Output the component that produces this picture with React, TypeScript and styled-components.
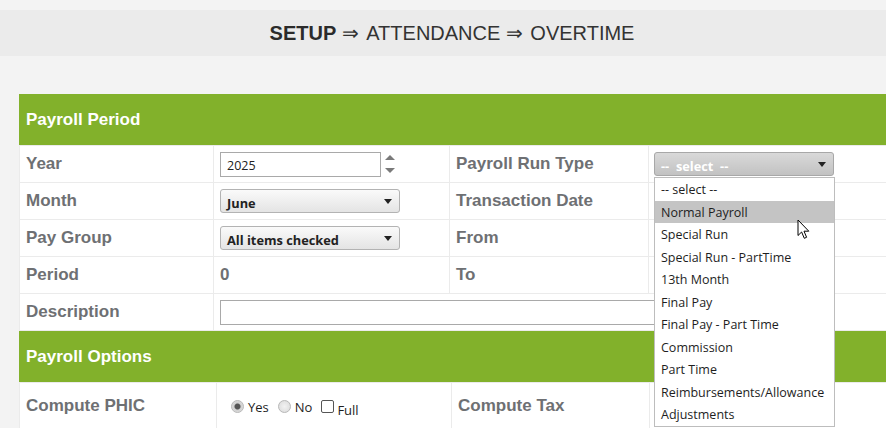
import React from 'react'
import styled, { createGlobalStyle } from 'styled-components'

const runTypes = [
  '-- select --',
  'Normal Payroll',
  'Special Run',
  'Special Run - PartTime',
  '13th Month',
  'Final Pay',
  'Final Pay - Part Time',
  'Commission',
  'Part Time',
  'Reimbursements/Allowance',
  'Adjustments',
]

const GlobalStyle = createGlobalStyle`
  html, body {
    margin: 0;
    padding: 0;
    background: #f3f3f3;
    overflow: hidden;
  }
  body {
    font-family: 'Liberation Sans', Arial, sans-serif;
  }
`

export default function App() {
  return (
    <Page>
      <GlobalStyle />
      <TopBar>
        <Crumb>SETUP</Crumb>
        <Sep>⇒</Sep>ATTENDANCE<Sep>⇒</Sep>OVERTIME
      </TopBar>
      <Content>
        <SectionHeader>Payroll Period</SectionHeader>
        <FormTable>
          <colgroup>
            <Col $w={194} />
            <Col $w={236} />
            <Col $w={199} />
            <Col />
          </colgroup>
          <tbody>
            <Row $h={37}>
              <Label>Year</Label>
              <Cell>
                <SpinWrap>
                  <TextInput $w={161} defaultValue="2025" />
                  <Spinner>
                    <SpinArrow $up />
                    <SpinArrow />
                  </Spinner>
                </SpinWrap>
              </Cell>
              <Label>Payroll Run Type</Label>
              <Cell $anchor $pad={5}>
                <Select $dark>
                  <span>--  select  --</span>
                  <Caret />
                </Select>
                <Menu>
                  {runTypes.map((t, i) => (
                    <MenuItem key={t} $active={i === 1}>
                      {t}
                    </MenuItem>
                  ))}
                  <Cursor viewBox="0 0 13 21" width="13" height="21">
                    <path
                      d="M1 1 L1 16.5 L4.6 13 L7.3 19.3 L9.6 18.3 L7 12.2 L11.8 12.2 Z"
                      fill="#fff"
                      stroke="#000"
                      strokeWidth="1"
                      strokeLinejoin="round"
                    />
                  </Cursor>
                </Menu>
              </Cell>
            </Row>
            <Row $h={37}>
              <Label>Month</Label>
              <Cell>
                <Select>
                  <span>June</span>
                  <Caret />
                </Select>
              </Cell>
              <Label>Transaction Date</Label>
              <Cell />
            </Row>
            <Row $h={37}>
              <Label>Pay Group</Label>
              <Cell>
                <Select>
                  <span>All items checked</span>
                  <Caret />
                </Select>
              </Cell>
              <Label>From</Label>
              <Cell />
            </Row>
            <Row $h={37}>
              <Label>Period</Label>
              <Label>0</Label>
              <Label>To</Label>
              <Cell />
            </Row>
            <Row $h={37}>
              <Label>Description</Label>
              <Cell colSpan={3}>
                <TextInput $w={560} />
              </Cell>
            </Row>
          </tbody>
        </FormTable>
        <SectionHeader>Payroll Options</SectionHeader>
        <FormTable>
          <colgroup>
            <Col $w={197} />
            <Col $w={235} />
            <Col $w={198} />
            <Col />
          </colgroup>
          <tbody>
            <Row $h={48}>
              <Label>Compute PHIC</Label>
              <Cell $pad={14}>
                <Choices>
                  <Radio $checked />
                  <ChoiceText>Yes</ChoiceText>
                  <Radio />
                  <ChoiceText>No</ChoiceText>
                  <Check />
                  <ChoiceText $low>Full</ChoiceText>
                </Choices>
              </Cell>
              <Label>Compute Tax</Label>
              <Cell />
            </Row>
          </tbody>
        </FormTable>
      </Content>
    </Page>
  )
}

const Page = styled.div`
  width: 886px;
  height: 428px;
  overflow: hidden;
`

const TopBar = styled.div`
  margin-top: 10px;
  height: 46px;
  padding-left: 18px;
  box-sizing: border-box;
  background: #ebebeb;
  display: flex;
  align-items: center;
  justify-content: center;
  font-size: 20px;
  color: #333;
`

const Crumb = styled.b`
  color: #2b2b2b;
`

const Sep = styled.span`
  margin: 0 7px 0 6px;
`

const Content = styled.div`
  padding: 38px 0 0 19px;
`

const SectionHeader = styled.div`
  width: 880px;
  height: 51px;
  padding-left: 7px;
  box-sizing: border-box;
  background: #82b12b;
  color: #fff;
  font-size: 17px;
  font-weight: bold;
  line-height: 51px;
`

const FormTable = styled.table`
  width: 880px;
  border-collapse: collapse;
  table-layout: fixed;
  background: #fff;
`

const Col = styled.col<{ $w?: number }>`
  width: ${(p) => (p.$w ? `${p.$w}px` : 'auto')};
`

const Row = styled.tr<{ $h: number }>`
  height: ${(p) => p.$h}px;
`

const Cell = styled.td<{ $anchor?: boolean; $pad?: number }>`
  border: 1px solid #ebebeb;
  padding: 0 0 0 ${(p) => p.$pad ?? 6}px;
  vertical-align: middle;
  position: ${(p) => (p.$anchor ? 'relative' : 'static')};
`

const Label = styled.td`
  border: 1px solid #ebebeb;
  padding: 0 0 1px 6px;
  vertical-align: middle;
  font-size: 17px;
  font-weight: bold;
  color: #6e7073;
  white-space: nowrap;
`

const SpinWrap = styled.div`
  display: flex;
  align-items: center;
`

const TextInput = styled.input<{ $w: number }>`
  width: ${(p) => p.$w}px;
  height: 25px;
  box-sizing: border-box;
  border: 1px solid #a9a9a9;
  padding: 2px 6px 0;
  font-family: 'Open Sans', sans-serif;
  font-size: 12.5px;
  color: #222;
  outline: none;
  background: #fff;
`

const Spinner = styled.div`
  display: flex;
  flex-direction: column;
  gap: 8px;
  margin-left: 4px;
`

const SpinArrow = styled.span<{ $up?: boolean }>`
  width: 0;
  height: 0;
  border-left: 5px solid transparent;
  border-right: 5px solid transparent;
  ${(p) => (p.$up ? 'border-bottom: 5px solid #7a7a7a;' : 'border-top: 5px solid #7a7a7a;')}
`

const Select = styled.div<{ $dark?: boolean }>`
  width: 180px;
  height: 24px;
  box-sizing: border-box;
  display: flex;
  align-items: center;
  justify-content: space-between;
  padding: 3px 7px 0 6px;
  border: 1px solid ${(p) => (p.$dark ? '#a8a8a8' : '#b3b3b3')};
  border-radius: 3px;
  background: ${(p) =>
    p.$dark
      ? 'linear-gradient(#d9d9d9, #c2c2c2)'
      : 'linear-gradient(#fafafa, #e4e4e4)'};
  font-family: 'Open Sans', sans-serif;
  font-size: 12.8px;
  font-weight: bold;
  color: ${(p) => (p.$dark ? '#fff' : '#222')};
  white-space: pre;
`

const Caret = styled.span`
  width: 0;
  height: 0;
  margin-top: -3px;
  border-left: 4px solid transparent;
  border-right: 4px solid transparent;
  border-top: 5px solid #222;
`

const Menu = styled.div`
  position: absolute;
  left: 5px;
  top: 31px;
  width: 181px;
  box-sizing: border-box;
  border: 1px solid #bdbdbd;
  background: #fff;
  z-index: 5;
`

const MenuItem = styled.div<{ $active?: boolean }>`
  height: 22.5px;
  box-sizing: border-box;
  padding: 2px 0 0 6px;
  line-height: 20.5px;
  font-family: 'Open Sans', sans-serif;
  font-size: 12.5px;
  color: #1e1e1e;
  white-space: nowrap;
  background: ${(p) => (p.$active ? '#c4c4c4' : '#fff')};
`

const Cursor = styled.svg`
  position: absolute;
  left: 142px;
  top: 41px;
`

const Choices = styled.div`
  display: flex;
  align-items: center;
  font-family: 'Open Sans', sans-serif;
  font-size: 13px;
  color: #1e1e1e;
`

const Radio = styled.span<{ $checked?: boolean }>`
  width: 11px;
  height: 11px;
  border-radius: 50%;
  border: 1px solid #b9b9b9;
  background: radial-gradient(
    circle,
    ${(p) => (p.$checked ? '#555 0 2.5px, #cfcfcf 3.5px, #e6e6e6 100%' : '#f2f2f2 0, #d9d9d9 100%')}
  );
  margin-right: 4px;
`

const Check = styled.span`
  width: 11px;
  height: 11px;
  border: 1px solid #555;
  border-radius: 2px;
  background: #fff;
  margin-right: 3px;
`

const ChoiceText = styled.span<{ $low?: boolean }>`
  margin-right: 9px;
  position: relative;
  top: ${(p) => (p.$low ? 3 : 0)}px;
`
